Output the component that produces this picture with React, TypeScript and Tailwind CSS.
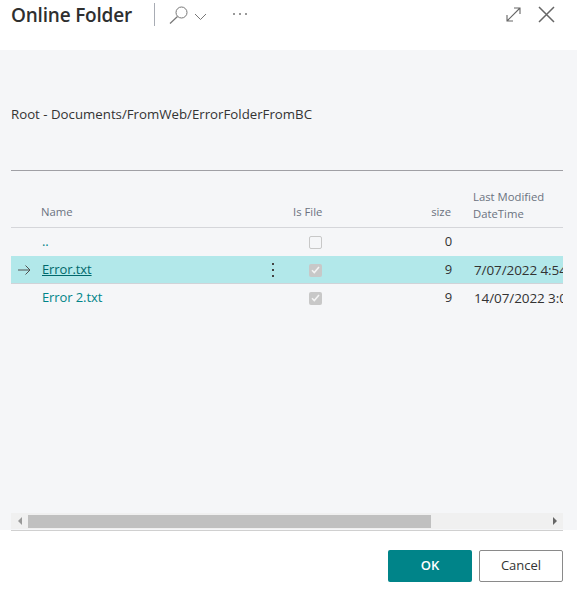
const font = { fontFamily: '"Open Sans", "Noto Sans", sans-serif' };

function Check({ checked }: { checked: boolean }) {
  return (
    <div className={`w-[13px] h-[13px] rounded-[2px] flex items-center justify-center ${checked ? 'bg-[#c8c8c8]' : 'border border-[#c8c8c8] bg-[#f5f6f8]'}`}>
      {checked && (
        <svg width="9" height="8" viewBox="0 0 9 8" fill="none">
          <path d="M1 4.2 L3.3 6.5 L8 1" stroke="#f4f4f4" strokeWidth="1.6" />
        </svg>
      )}
    </div>
  );
}

function Row({ name, size, date, checked, selected, nameCls }: { name: string; size: string; date: string; checked: boolean; selected?: boolean; nameCls?: string }) {
  return (
    <div className={`flex items-center h-[28px] pt-[1px] text-[13px] tracking-[-0.1px] border-b ${selected ? 'bg-[#b2e8ea] border-[#d0d3d8]' : 'border-transparent'}`}>
      <div className="w-[31px] pl-[8px] shrink-0">
        {selected && (
          <svg width="13" height="10" viewBox="0 0 13 10" fill="none" className="ml-[-1px]">
            <path d="M0 5 H12 M7.5 .5 L12 5 L7.5 9.5" stroke="#505050" strokeWidth="1" />
          </svg>
        )}
      </div>
      <div className={`w-[225px] shrink-0 ${nameCls ?? 'text-[#008489]'}`}>{name}</div>
      <div className="w-[12px] shrink-0 flex flex-col items-center gap-[4px]">
        {selected && (
          <>
            <span className="w-[2px] h-[2px] bg-[#444]" />
            <span className="w-[2px] h-[2px] bg-[#444]" />
            <span className="w-[2px] h-[2px] bg-[#444]" />
          </>
        )}
      </div>
      <div className="w-[30px] shrink-0" />
      <div className="w-[13px] shrink-0"><Check checked={checked} /></div>
      <div className="w-[130px] shrink-0 text-right text-[#333]">{size}</div>
      <div className="ml-[22px] whitespace-nowrap overflow-hidden w-[90px] text-[13.5px] text-[#333]">{date}</div>
    </div>
  );
}

export default function App() {
  return (
    <div className="w-[577px] h-[592px] bg-white overflow-hidden flex flex-col" style={font}>
      <header className="h-[50px] shrink-0 flex items-start pl-[11px] pr-[22px] pt-[3px]">
        <h1 className="text-[19px] leading-[24px] font-semibold text-[#2f2f2f] w-[143px] tracking-[-0.2px]">Online Folder</h1>
        <div className="w-px h-[23px] bg-[#a8acb4]" />
        <svg width="19" height="18" viewBox="0 0 19 18" fill="none" className="ml-[14px] mt-[3px]">
          <circle cx="12.5" cy="6.5" r="5.5" stroke="#777" strokeWidth="1" />
          <path d="M8.5 10.5 L1 17.5" stroke="#777" strokeWidth="1.2" />
        </svg>
        <svg width="13" height="8" viewBox="0 0 13 8" fill="none" className="ml-[6px] mt-[10px]">
          <path d="M1 1 L6.5 6.5 L12 1" stroke="#777" strokeWidth="1" />
        </svg>
        <div className="ml-[26px] mt-[10px] flex gap-[4px]">
          <span className="w-[2px] h-[2px] bg-[#777] rounded-full" />
          <span className="w-[2px] h-[2px] bg-[#777] rounded-full" />
          <span className="w-[2px] h-[2px] bg-[#777] rounded-full" />
        </div>
        <div className="ml-auto flex items-center gap-[17px] mt-[3px]">
          <svg width="15" height="15" viewBox="0 0 15 15" fill="none">
            <path d="M1 14 L14 1 M8 1 H14 V7 M1 8 V14 H7" stroke="#666" strokeWidth="1.1" />
          </svg>
          <svg width="17" height="17" viewBox="0 0 17 17" fill="none">
            <path d="M1 1 L16 16 M16 1 L1 16" stroke="#666" strokeWidth="1.5" />
          </svg>
        </div>
      </header>

      <main className="h-[480px] shrink-0 bg-[#f5f6f8] px-[11px] pr-[14px] flex flex-col">
        <p className="mt-[55px] text-[13.25px] leading-[18px] text-[#333]">Root - Documents/FromWeb/ErrorFolderFromBC</p>
        <div className="mt-[47px] border-t border-[#a0a0a5] h-[57px] flex items-end text-[11.3px] text-[#6b7280]">
          <div className="flex items-end w-full pb-[5px]">
            <span className="ml-[30px] w-[252px] leading-[17px] pb-[2px]">Name</span>
            <span className="w-[40px] leading-[17px] pb-[2px]">Is File</span>
            <span className="w-[118px] text-right leading-[17px] pb-[2px]">size</span>
            <span className="ml-[22px] leading-[17px] whitespace-nowrap">Last Modified<br />DateTime</span>
          </div>
        </div>
        <div className="border-t border-[#d5d6da]">
          <Row name=".." size="0" date="" checked={false} />
          <Row name="Error.txt" size="9" date="7/07/2022 4:54 PM" checked selected nameCls="text-[#00686c] underline" />
          <Row name="Error 2.txt" size="9" date="14/07/2022 3:00 PM" checked />
        </div>
        <div className="mt-auto h-[16px] mb-[1px] bg-[#f0f0f0] flex items-center">
          <div className="w-[17px] flex justify-center">
            <span className="w-0 h-0 border-y-[4px] border-y-transparent border-r-[4px] border-r-[#999]" />
          </div>
          <div className="w-[403px] h-[13px] bg-[#c0c0c0]" />
          <div className="ml-auto w-[17px] flex justify-center">
            <span className="w-0 h-0 border-y-[4px] border-y-transparent border-l-[4px] border-l-[#666]" />
          </div>
        </div>
      </main>

      <footer className="flex-1 mx-[11px] mr-[14px] border-t border-[#d0d0d0] flex justify-end gap-[7px] pt-[19px]">
        <button className="w-[84px] h-[32px] bg-[#008489] rounded-[2px] text-white text-[13px] font-semibold">OK</button>
        <button className="w-[84px] h-[32px] bg-white border border-[#8a8a8a] rounded-[2px] text-[#333] text-[13px]">Cancel</button>
      </footer>
    </div>
  );
}
